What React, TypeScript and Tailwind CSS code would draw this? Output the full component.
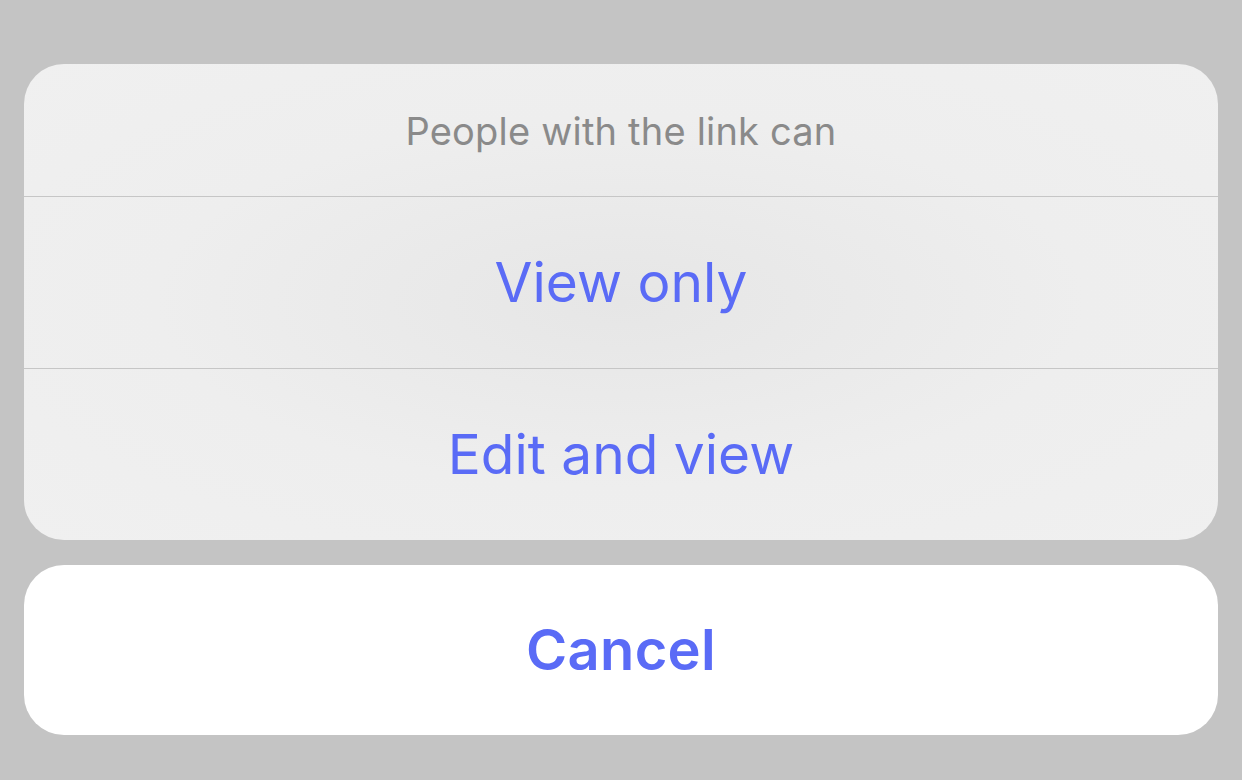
export default function App() {
  const options = ['View only', 'Edit and view']

  return (
    <div
      className="w-[1242px] h-[780px] bg-[#c4c4c4] px-6 pt-16 flex flex-col gap-[25px]"
      style={{ fontFamily: 'Inter, "Noto Sans", sans-serif' }}
    >
      {/* Options sheet */}
      <div className="rounded-[40px] overflow-hidden bg-[radial-gradient(ellipse_at_center,#e6e6e6_0%,#eeeeee_55%,#f0f0f0_100%)] flex flex-col">
        <div className="h-[132px] flex items-center justify-center pt-[2px]">
          <span className="text-[38px] text-[#8a8a8a] tracking-[0.2px]">People with the link can</span>
        </div>
        {options.map(label => (
          <button
            key={label}
            className="h-[172px] border-t border-[#c6c6c6] flex items-center justify-center"
          >
            <span className="text-[55px] text-[#5a6bf6] leading-none">{label}</span>
          </button>
        ))}
      </div>

      {/* Cancel */}
      <button className="h-[170px] rounded-[40px] bg-white flex items-center justify-center">
        <span className="text-[56px] font-semibold text-[#5a6bf6] leading-none tracking-[0.3px]">Cancel</span>
      </button>
    </div>
  )
}
